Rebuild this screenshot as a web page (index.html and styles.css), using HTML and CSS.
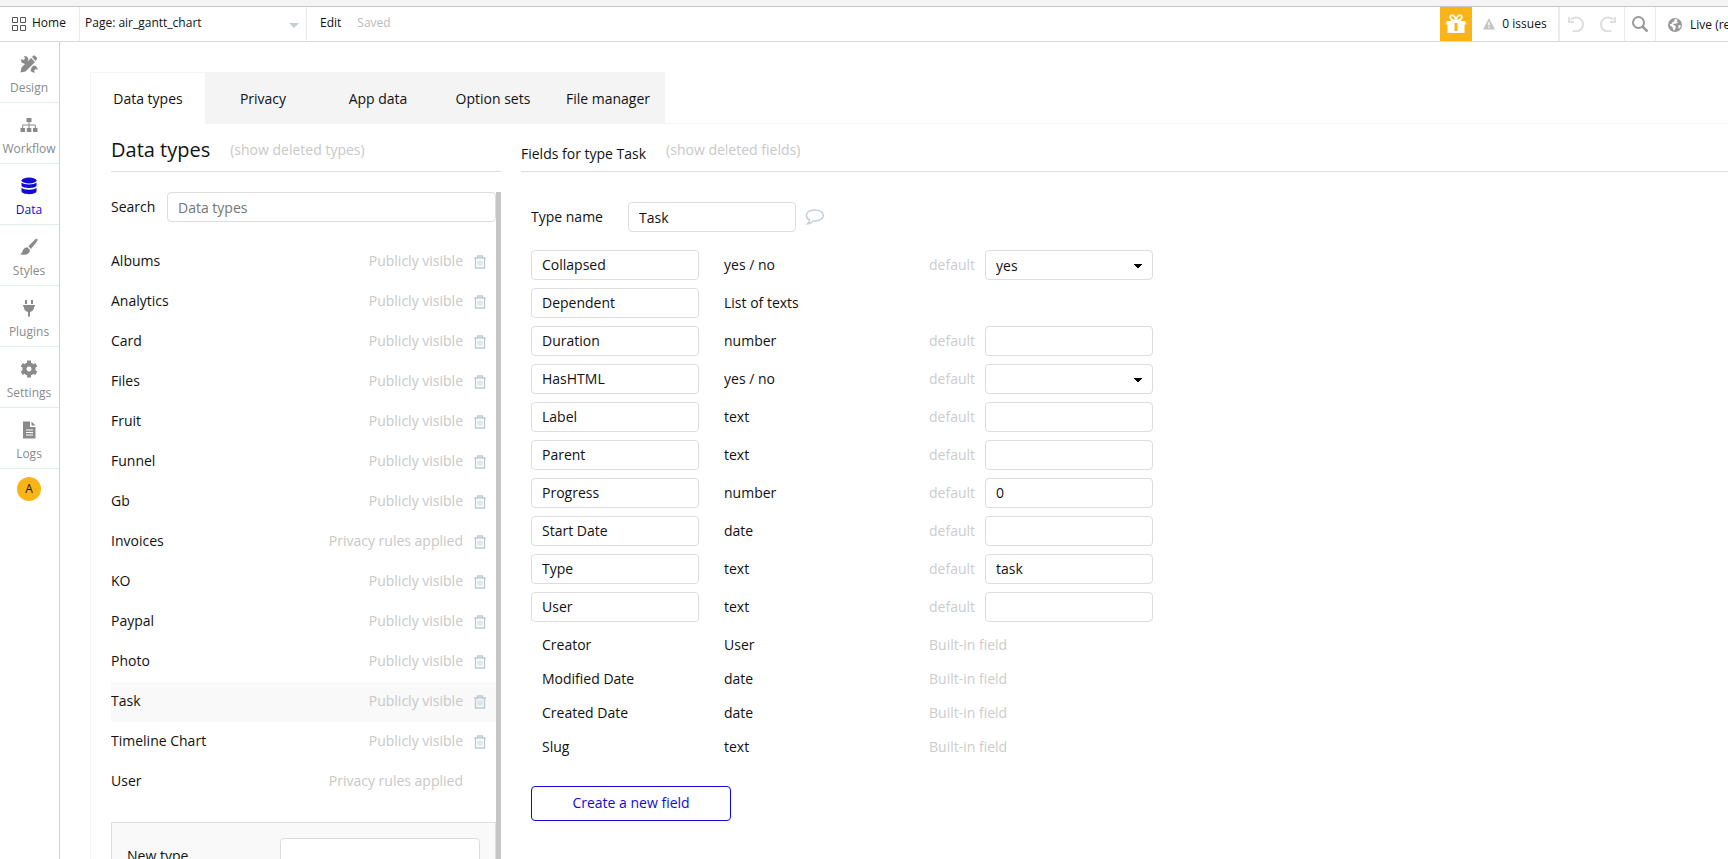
FILE: index.html
```html
<!DOCTYPE html>
<html lang="en">
<head>
    <meta charset="UTF-8">
    <meta name="viewport" content="width=device-width, initial-scale=1.0">
    <title>Data types</title>
    <link rel="stylesheet" href="styles.css">
</head>
<body>

    <!-- icons used more than once -->
    <svg class="sprite" aria-hidden="true">
        <symbol id="trash" viewBox="0 0 12 14">
            <path d="M0 3h12M3.500 3V1h5v2M1.500 3v10h9V3" fill="none" stroke="#bccace" stroke-width="1.300"/>
            <path d="M4 5.500v5M6 5.500v5M8 5.500v5" stroke="#bcd2e0"/>
        </symbol>
    </svg>

    <header class="topbar">
        <a class="home" href="#">
            <svg width="14" height="14" viewBox="0 0 14 14" fill="none" stroke="#555"><path d="M.5.5h5v5h-5zM8.500.5h5v5h-5zM.5 8.500h5v5h-5zM8.500 8.500h5v5h-5z"/></svg>
            Home
        </a>
        <div class="page-picker">
            <select aria-label="Page">
                <option>Page: air_gantt_chart</option>
            </select>
        </div>
        <button class="edit">Edit</button>
        <span class="saved">Saved</span>

        <div class="tools">
            <button class="gift" aria-label="Gift">
                <svg width="22" height="20" viewBox="0 0 22 20"><path d="M2 7h18l1.500 3.500h-2V19h-17v-8.500h-2z" fill="#fff"/><path d="M11 9v8" stroke="#fbb418" stroke-width="3"/><path d="M11 7C5 7 3.500 1.500 7 1.200c2.500 0 3.500 3 4 5.800.5-2.800 1.500-5.800 4-5.800C18.500 1.500 17 7 11 7z" fill="#fbb418" stroke="#fff" stroke-width="1.800"/></svg>
            </button>
            <button class="issues">
                <svg width="12" height="12" viewBox="0 0 12 12"><path d="M6 0 12 11.500H0z" fill="#c4c4c4"/><path d="M6 4v3.500M6 8.500V10" stroke="#fff" stroke-width="1.300"/></svg>
                0 issues
            </button>
            <div class="history">
                <button aria-label="Undo">
                    <svg width="16" height="16" viewBox="0 0 16 16" fill="none" stroke="#dedede" stroke-width="2"><path d="M4.500 14.500A7 7 0 1 0 3 3.500M1 1v5h5"/></svg>
                </button>
                <button aria-label="Redo">
                    <svg width="16" height="16" viewBox="0 0 16 16" fill="none" stroke="#dedede" stroke-width="2"><path d="M11.500 14.500A7 7 0 1 1 13 3.500M15 1v5h-5"/></svg>
                </button>
            </div>
            <button class="search-btn" aria-label="Search">
                <svg width="16" height="16" viewBox="0 0 16 16" fill="none" stroke="#999" stroke-width="2"><circle cx="6.500" cy="6.500" r="5.500"/><path d="m10.500 10.500 5 5" stroke-width="2.500"/></svg>
            </button>
            <a class="live" href="#">
                <svg width="14" height="14" viewBox="0 0 14 14"><circle cx="7" cy="7" r="7" fill="#999"/><path d="M7 1l3 .7L8.500 3 10 4.500 7.500 6 6 5.500 5 6.500l2 1 1 1.500-1.500 3.500-1.500-1L4.500 9 2 7.500V6l2.500-.5L4 4.500l2-1zM10.500 7l2.500.5-.8 2-1.700 1.500z" fill="#fff"/></svg>
                Live (read only)
            </a>
        </div>
    </header>

    <div class="main">
        <nav class="sidebar">
            <a href="#">
                <svg width="18" height="18" viewBox="0 0 18 18" fill="#8a8a8a"><path d="m.5 17.500 1-5L11 3l4 4-9.500 9.500zM12 2l1.500-1.500c1.500-.5 4 2 3.500 3.500L15.500 6zM1 4l2.500 1 1.500-1.500L4 1l3 .5L8.500 4 7 7.500 5 9 1.500 7.500zM11.500 12.500 13.500 10.500 16 11l1.500 2.500v1.500l-2-1-1.500 1.500 1 2h-2L10.500 16z"/></svg>
                Design
            </a>
            <a href="#">
                <svg width="18" height="18" viewBox="0 0 18 18" fill="#8a8a8a"><path d="M6.500 2h5v4h-5zM.5 12H5v4H.5zM6.800 12h4.500v4H6.800zM13 12h4.500v4H13z"/><path d="M9 6v6M2.700 12V9h12.600v3" fill="none" stroke="#8a8a8a"/></svg>
                Workflow
            </a>
            <a class="active" href="#">
                <svg width="18" height="18" viewBox="0 0 18 18" fill="#0f0bd8"><ellipse cx="9" cy="3.500" rx="7.500" ry="3"/><path d="M1.500 5.500c2 2.500 13 2.500 15 0v3.200c-1 3-14 3-15 0zM1.500 10.800c2 2.500 13 2.500 15 0V14.500c-1 3.500-14 3.500-15 0z"/></svg>
                Data
            </a>
            <a href="#">
                <svg width="18" height="18" viewBox="0 0 18 18" fill="#8a8a8a"><path d="M17 .8c1 .7.400 2-.3 3L11 11 8.300 8.300l6.500-6.500C15.500 1 16.300.4 17 .8zM7.300 9.200 10 12c-.3 3.500-3.500 5.500-8 4.500-1 0-1.600-.5-2-1 2.500 0 2.200-2 3-3.500.800-1.700 2.500-2.800 4.300-2.800z"/></svg>
                Styles
            </a>
            <a href="#">
                <svg width="18" height="18" viewBox="0 0 18 18" fill="#8a8a8a"><path d="M5 1h2v4H5zM11 1h2v4h-2zM3 6h12v1.500h-.8c0 3-1.500 5-4.200 5.500v4.500H8V13c-2.700-.5-4.200-2.500-4.200-5.500H3z"/></svg>
                Plugins
            </a>
            <a href="#">
                <svg width="18" height="18" viewBox="0 0 18 18"><path d="M9 4.500a4.500 4.500 0 1 0 .01 0z" fill="none" stroke="#8a8a8a" stroke-width="4"/><path d="M9 .5v3M9 14.500v3M1.700 4.800l2.500 1.400M13.800 11.800l2.500 1.400M1.700 13.200l2.500-1.400M13.800 6.200l2.500-1.400" stroke="#8a8a8a" stroke-width="4"/></svg>
                Settings
            </a>
            <a href="#">
                <svg width="18" height="18" viewBox="0 0 18 18"><path d="M3 .5h7V6h5.500v11.500H3zM11.500.5l4 4h-4z" fill="#8a8a8a"/><path d="M6 9h7M6 11.500h7M6 14h7" stroke="#fff"/></svg>
                Logs
            </a>
            <button class="avatar">A</button>
        </nav>

        <div class="content">
            <nav class="tabs">
                <a class="active" href="#">Data types</a>
                <a href="#">Privacy</a>
                <a href="#">App data</a>
                <a href="#">Option sets</a>
                <a href="#">File manager</a>
            </nav>

            <div class="panel">
                <section class="types">
                    <div class="heading">
                        <h1>Data types</h1>
                        <a href="#">(show deleted types)</a>
                    </div>
                    <div class="types-scroll">
                        <div class="search">
                            <label for="search">Search</label>
                            <input id="search" type="text" placeholder="Data types">
                        </div>
                        <ul class="type-list">
                            <li><span>Albums</span><em>Publicly visible</em><button aria-label="Delete Albums"><svg><use href="#trash"/></svg></button></li>
                            <li><span>Analytics</span><em>Publicly visible</em><button aria-label="Delete Analytics"><svg><use href="#trash"/></svg></button></li>
                            <li><span>Card</span><em>Publicly visible</em><button aria-label="Delete Card"><svg><use href="#trash"/></svg></button></li>
                            <li><span>Files</span><em>Publicly visible</em><button aria-label="Delete Files"><svg><use href="#trash"/></svg></button></li>
                            <li><span>Fruit</span><em>Publicly visible</em><button aria-label="Delete Fruit"><svg><use href="#trash"/></svg></button></li>
                            <li><span>Funnel</span><em>Publicly visible</em><button aria-label="Delete Funnel"><svg><use href="#trash"/></svg></button></li>
                            <li><span>Gb</span><em>Publicly visible</em><button aria-label="Delete Gb"><svg><use href="#trash"/></svg></button></li>
                            <li><span>Invoices</span><em>Privacy rules applied</em><button aria-label="Delete Invoices"><svg><use href="#trash"/></svg></button></li>
                            <li><span>KO</span><em>Publicly visible</em><button aria-label="Delete KO"><svg><use href="#trash"/></svg></button></li>
                            <li><span>Paypal</span><em>Publicly visible</em><button aria-label="Delete Paypal"><svg><use href="#trash"/></svg></button></li>
                            <li><span>Photo</span><em>Publicly visible</em><button aria-label="Delete Photo"><svg><use href="#trash"/></svg></button></li>
                            <li class="selected"><span>Task</span><em>Publicly visible</em><button aria-label="Delete Task"><svg><use href="#trash"/></svg></button></li>
                            <li><span>Timeline Chart</span><em>Publicly visible</em><button aria-label="Delete Timeline Chart"><svg><use href="#trash"/></svg></button></li>
                            <!-- the User type can't be deleted -->
                            <li class="locked"><span>User</span><em>Privacy rules applied</em></li>
                        </ul>
                        <div class="new-type">
                            <label for="new-type">New type</label>
                            <input id="new-type" type="text">
                        </div>
                    </div>
                </section>

                <section class="fields">
                    <div class="heading">
                        <h2>Fields for type Task</h2>
                        <a href="#">(show deleted fields)</a>
                    </div>
                    <div class="fields-body">
                        <div class="type-name">
                            <label for="type-name">Type name</label>
                            <input id="type-name" type="text" value="Task">
                            <button aria-label="Comment">
                                <svg width="20" height="18" viewBox="0 0 20 18" fill="none" stroke="#c3d0d6" stroke-width="1.500"><path d="M4.500 12C-1 8.500 1 2 10 2c5 0 8.300 2.500 8.300 5.500S15 13 10 13H8.500c-1.500 1.500-3.500 2.500-6 2.800 1.300-1 2-2.300 2-3.800z"/></svg>
                            </button>
                        </div>

                        <table class="field-table">
                            <tr>
                                <td><input type="text" value="Collapsed" aria-label="Field name"></td><td>yes / no</td>
                                <td><label for="d1">default</label></td><td><select id="d1"><option>yes</option><option>no</option></select></td>
                            </tr>
                            <tr>
                                <td><input type="text" value="Dependent" aria-label="Field name"></td><td>List of texts</td>
                                <td></td><td></td>
                            </tr>
                            <tr>
                                <td><input type="text" value="Duration" aria-label="Field name"></td><td>number</td>
                                <td><label for="d3">default</label></td><td><input id="d3" type="text"></td>
                            </tr>
                            <tr>
                                <td><input type="text" value="HasHTML" aria-label="Field name"></td><td>yes / no</td>
                                <td><label for="d4">default</label></td><td><select id="d4"><option></option><option>yes</option><option>no</option></select></td>
                            </tr>
                            <tr>
                                <td><input type="text" value="Label" aria-label="Field name"></td><td>text</td>
                                <td><label for="d5">default</label></td><td><input id="d5" type="text"></td>
                            </tr>
                            <tr>
                                <td><input type="text" value="Parent" aria-label="Field name"></td><td>text</td>
                                <td><label for="d6">default</label></td><td><input id="d6" type="text"></td>
                            </tr>
                            <tr>
                                <td><input type="text" value="Progress" aria-label="Field name"></td><td>number</td>
                                <td><label for="d7">default</label></td><td><input id="d7" type="text" value="0"></td>
                            </tr>
                            <tr>
                                <td><input type="text" value="Start Date" aria-label="Field name"></td><td>date</td>
                                <td><label for="d8">default</label></td><td><input id="d8" type="text"></td>
                            </tr>
                            <tr>
                                <td><input type="text" value="Type" aria-label="Field name"></td><td>text</td>
                                <td><label for="d9">default</label></td><td><input id="d9" type="text" value="task"></td>
                            </tr>
                            <tr>
                                <td><input type="text" value="User" aria-label="Field name"></td><td>text</td>
                                <td><label for="d10">default</label></td><td><input id="d10" type="text"></td>
                            </tr>
                            <tr class="built-in"><td>Creator</td><td>User</td><td colspan="2">Built-in field</td></tr>
                            <tr class="built-in"><td>Modified Date</td><td>date</td><td colspan="2">Built-in field</td></tr>
                            <tr class="built-in"><td>Created Date</td><td>date</td><td colspan="2">Built-in field</td></tr>
                            <tr class="built-in"><td>Slug</td><td>text</td><td colspan="2">Built-in field</td></tr>
                        </table>

                        <button class="create">Create a new field</button>
                    </div>
                </section>
            </div>
        </div>
    </div>

</body>
</html>
```
FILE: styles.css
```css
* {
    box-sizing: border-box;
}
body {
    margin: 0;
    height: 100vh;
    display: flex;
    flex-direction: column;
    overflow: hidden;
    background-color: #fff;
    border-top: 6px solid #f4f4f4;
    font-family: "Open Sans", sans-serif;
    font-size: 14px;
    line-height: 20px;
    color: #111;
}
a {
    color: inherit;
    text-decoration: none;
}
button {
    padding: 0;
    border: none;
    background: none;
    font: inherit;
    color: inherit;
    cursor: pointer;
}
svg {
    display: block;
    flex: none;
}
.sprite {
    position: absolute;
    width: 0;
    height: 0;
}
input, select {
    width: 168px;
    height: 30px;
    padding: 0 10px;
    border: 1px solid #ddd;
    border-radius: 4px;
    background-color: #fff;
    font: inherit;
    color: inherit;
}
input::placeholder {
    color: #757575;
}
select {
    appearance: none;
}

/* top bar */
.topbar {
    flex: none;
    display: flex;
    height: 36px;
    border-top: 1px solid #c5c5c5;
    border-bottom: 1px solid #d8dada;
    font-size: 12px;
    line-height: 32px;
}
.home {
    display: flex;
    gap: 6px;
    width: 80px;
    padding-left: 12px;
    border-right: 1px solid #e6ebed;
}
.home svg {
    margin-top: 10px;
}
.page-picker {
    position: relative;
    width: 227px;
    border-right: 1px solid #e6ebed;
}
.page-picker select {
    width: 100%;
    height: 32px;
    padding: 0 5px;
    border: none;
    background: none;
}
.page-picker::after {
    content: "";
    position: absolute;
    right: 7px;
    top: 16px;
    border: 5px solid transparent;
    border-top-color: #c3ced3;
    border-bottom: none;
    pointer-events: none;
}
.edit {
    height: 32px;
    margin-left: 13px;
}
.saved {
    margin-left: 16px;
    color: #bbb;
}
.tools {
    display: flex;
    margin-left: auto;
}
.tools button {
    display: flex;
    align-items: center;
    justify-content: center;
}
.gift {
    width: 32px;
    background-color: #fbb418;
}
.issues {
    gap: 7px;
    width: 88px;
    border-right: 2px solid #e6ebed;
}
.history {
    display: flex;
    align-items: center;
    justify-content: center;
    gap: 16px;
    width: 65px;
    border-right: 1px solid #e6ebed;
}
.search-btn {
    width: 31px;
    border-right: 1px solid #e6ebed;
}
.live {
    display: flex;
    align-items: center;
    gap: 8px;
    width: 72px;
    padding-left: 12px;
    padding-top: 2px;
    overflow: hidden;
    white-space: nowrap;
}

.main {
    flex: 1;
    display: flex;
    min-height: 0;
}

/* left menu */
.sidebar {
    flex: none;
    width: 60px;
    border-right: 1px solid #d0d3d3;
    font-size: 12px;
    color: #8a8a8a;
}
.sidebar a {
    display: flex;
    flex-direction: column;
    align-items: center;
    gap: 5px;
    height: 61px;
    padding-top: 13px;
    padding-right: 1px;
    border-bottom: 1px solid #e2edf0;
}
.sidebar .active {
    color: #0f0bd8;
}
.avatar {
    display: block;
    width: 24px;
    height: 24px;
    margin: 8px 17px;
    border-radius: 50%;
    background-color: #fbb418;
    font-size: 12px;
    color: #111;
}

/* tabs */
.content {
    flex: 1;
    display: flex;
    flex-direction: column;
    min-width: 0;
    padding: 30px 0 0 30px;
}
.tabs {
    display: flex;
    flex: none;
    border-bottom: 1px solid #f4f4f4;
}
.tabs a {
    width: 115px;
    height: 52px;
    margin-bottom: -1px;
    border: 1px solid #f4f4f4;
    border-width: 1px 0 0 1px;
    background-color: #f4f4f4;
    line-height: 52px;
    text-align: center;
}
.tabs .active {
    background-color: #fff;
}
.panel {
    flex: 1;
    display: flex;
    gap: 20px;
    min-height: 0;
    padding-left: 20px;
    border-left: 1px solid #f4f4f4;
}
.heading {
    flex: none;
    display: flex;
    gap: 20px;
    height: 48px;
    padding-top: 16px;
    border-bottom: 1px solid #ddd;
}
.heading a {
    color: #c8c8c8;
}
h1, h2 {
    margin: 0;
    font-weight: normal;
}
h1 {
    font-size: 20px;
}
h2 {
    padding-top: 4px;
    font-size: 14px;
}

/* data types list */
.types {
    display: flex;
    flex-direction: column;
    width: 390px;
}
.types-scroll {
    flex: 1;
    min-height: 0;
    margin-top: 20px;
    border-right: 5px solid #c5c5c5;
    overflow: hidden;
}
.search {
    display: flex;
    align-items: center;
    justify-content: space-between;
}
.search input {
    width: 329px;
}
.type-list {
    margin: 20px 0;
    padding: 0;
    list-style: none;
}
.type-list li {
    display: flex;
    align-items: center;
    height: 40px;
    padding-right: 10px;
}
.type-list span, .type-list em {
    padding-bottom: 2px;
}
.type-list span {
    flex: 1;
}
.type-list em {
    font-style: normal;
    color: #c8c8c8;
}
.type-list button {
    margin-left: 11px;
}
.type-list svg {
    width: 12px;
    height: 14px;
}
.type-list .selected {
    background-color: #f9f9f9;
}
.type-list .locked {
    padding-right: 33px;
}
.new-type {
    display: flex;
    align-items: center;
    justify-content: space-between;
    padding: 15px;
    border: 1px solid #ddd;
    background-color: #f9f9f9;
}
.new-type input {
    width: 200px;
    height: 35px;
}

/* fields of the selected type */
.fields {
    flex: 1;
    min-width: 0;
}
.fields-body {
    padding: 30px 10px;
}
.type-name {
    display: flex;
    align-items: center;
    margin-bottom: 18px;
}
.type-name label {
    width: 97px;
}
.type-name button {
    margin-left: 9px;
}
.field-table {
    border-collapse: collapse;
    line-height: 30px;
}
.field-table td {
    height: 38px;
    padding: 0;
    vertical-align: top;
}
.field-table td:nth-child(1) {
    width: 193px;
}
.field-table td:nth-child(2) {
    width: 205px;
}
.field-table td:nth-child(3) {
    width: 56px;
    color: #ccc;
}
.field-table input, .field-table select, .field-table label {
    display: block;
}
/* the two halves of the arrow */
.field-table select {
    background-image: linear-gradient(to bottom left, #000 50%, transparent 51%), linear-gradient(to bottom right, #000 50%, transparent 51%);
    background-position: right 14px top 13px, right 10px top 13px;
    background-size: 4px 5px;
    background-repeat: no-repeat;
}
.field-table .built-in td {
    height: 34px;
}
.field-table .built-in td:first-child {
    padding-left: 11px;
}
.create {
    width: 200px;
    height: 35px;
    margin-top: 20px;
    padding-bottom: 2px;
    border: 1px solid #0f0bd8;
    border-radius: 4px;
    color: #0f0bd8;
}
```
